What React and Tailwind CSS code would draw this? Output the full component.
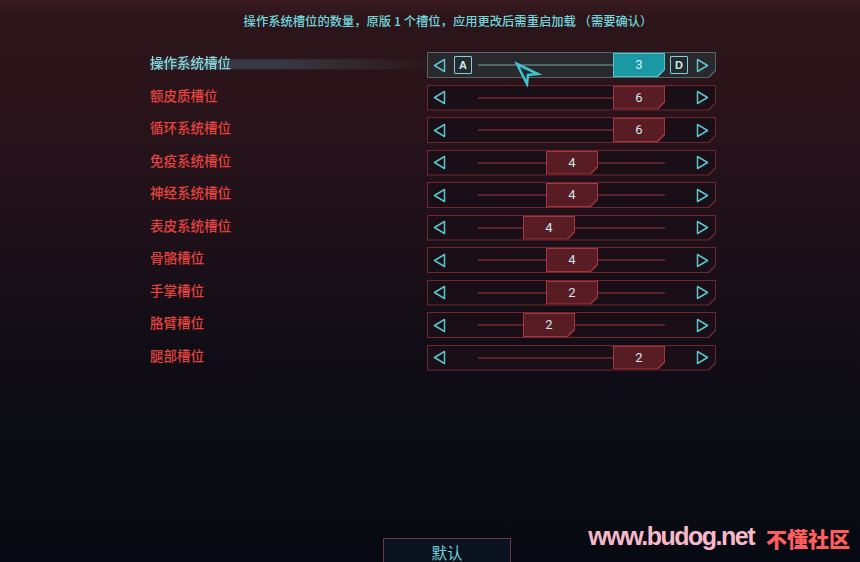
import React from 'react'

const rows = [
  { label: '操作系统槽位', value: 3, left: 186, active: true },
  { label: '额皮质槽位', value: 6, left: 186 },
  { label: '循环系统槽位', value: 6, left: 186 },
  { label: '免疫系统槽位', value: 4, left: 119 },
  { label: '神经系统槽位', value: 4, left: 119 },
  { label: '表皮系统槽位', value: 4, left: 96 },
  { label: '骨骼槽位', value: 4, left: 119 },
  { label: '手掌槽位', value: 2, left: 119 },
  { label: '胳臂槽位', value: 2, left: 96 },
  { label: '腿部槽位', value: 2, left: 186 },
]

const cut7 = '[clip-path:polygon(0_0,100%_0,100%_calc(100%_-_7px),calc(100%_-_7px)_100%,0_100%)]'

function Arrow({ dir }) {
  return (
    <svg width="13" height="15" viewBox="0 0 13 15" className="shrink-0">
      {dir === 'left' ? (
        <polygon points="11.5,1.5 1.5,7.5 11.5,13.5" fill="none" stroke="#5cc3cc" strokeWidth="1.5" strokeLinejoin="round" />
      ) : (
        <polygon points="1.5,1.5 11.5,7.5 1.5,13.5" fill="none" stroke="#5cc3cc" strokeWidth="1.5" strokeLinejoin="round" />
      )}
    </svg>
  )
}

function Key({ k }) {
  return (
    <div className="w-[18px] h-[18px] border border-[#7fd2d8] rounded-[1px] flex items-center justify-center text-[11px] font-bold text-[#c6eef0] leading-none shrink-0 font-['Liberation_Sans',sans-serif]">
      {k}
    </div>
  )
}

function Slider({ row }) {
  const active = row.active
  return (
    <div className={`relative w-[289px] h-[26px] p-px ${cut7} ${active ? 'bg-[#56656a]' : 'bg-[#6e2731]'}`}>
      <div className={`relative w-full h-full ${cut7} ${active ? 'bg-[#29282d]' : 'bg-[#1a0f17]'} flex items-center pl-[5px] pr-[6px]`}>
        <Arrow dir="left" />
        {active ? (
          <div className="ml-[8px]"><Key k="A" /></div>
        ) : (
          <div className="ml-[8px] w-[18px]" />
        )}
        <div className="flex-1 flex items-center pl-[6px] pr-[5px]">
          <div className={`h-[2px] w-full ${active ? 'bg-[#4d676c]' : 'bg-[#5c2229]'}`} />
        </div>
        {active ? (
          <div className="mr-[8px]"><Key k="D" /></div>
        ) : (
          <div className="mr-[8px] w-[18px]" />
        )}
        <Arrow dir="right" />
        {/* thumb sits over the track */}
        <div
          className={`absolute top-0 h-full w-[52px] p-px ${cut7} ${active ? 'bg-[#4fc7cf]' : 'bg-[#a6353d]'}`}
          style={{ left: row.left - 1 }}
        >
          <div className={`w-full h-full ${cut7} flex items-center justify-center text-[13px] font-['Roboto',sans-serif] ${active ? 'bg-[#1a98a3] text-[#d2f4f6]' : 'bg-[#581c25] text-[#cfe6ea]'}`}>
            {row.value}
          </div>
        </div>
      </div>
    </div>
  )
}

export default function App() {
  return (
    <div className="relative w-[860px] h-[562px] overflow-hidden flex flex-col bg-[linear-gradient(180deg,#3a1c22_0%,#2c151a_3%,#29131a_20%,#1e1019_42%,#110d16_62%,#0a0b13_78%,#070a12_100%)] font-['Noto_Sans_CJK_SC',sans-serif]">
      {/* header hint */}
      <div className="pt-[12px] h-[52px] text-center text-[12.3px] leading-[18px] font-medium text-[#72d4da] pl-[36px]">
        操作系统槽位的数量，原版 1 个槽位，应用更改后需重启加载 （需要确认）
      </div>

      {/* slot rows */}
      <div className="flex flex-col gap-[6.5px] pl-[150px]">
        {rows.map((row) => (
          <div key={row.label} className="flex items-center h-[26px]">
            <div className="w-[277px] pb-[6px]">
              <div
                className={`text-[13.5px] leading-[16px] font-medium ${
                  row.active
                    ? 'text-[#86d6dc] w-[285px] bg-[linear-gradient(180deg,rgba(80,115,125,0)_0%,rgba(80,115,125,0)_25%,rgba(80,115,125,0.4)_40%,rgba(80,115,125,0.4)_90%,rgba(80,115,125,0)_100%)] [mask-image:linear-gradient(90deg,#000_0%,#000_45%,transparent_100%)]'
                    : 'w-max text-[#e2443f]'
                }`}
              >
                {row.label}
              </div>
            </div>
            <Slider row={row} />
          </div>
        ))}
      </div>

      <div className="flex-1" />

      {/* footer */}
      <div className="h-[24px] flex items-start pl-[383px]">
        <div className="w-[128px] h-[30px] p-px bg-[#6a3a42] shrink-0">
          <div className="w-full h-full bg-[#0c1320] flex justify-center pt-[3px] text-[15.5px] leading-[20px] text-[#6fd0d8]">
            默认
          </div>
        </div>
        <div className="ml-auto mr-[10px] -mt-[14px] flex items-end gap-[12px] font-bold leading-none">
          <span className="text-[25px] tracking-[-1.5px] text-[#f7b9c8] font-['Liberation_Sans',sans-serif]">www.budog.net</span>
          <span className="text-[21px] font-black text-[#ff5e5e] font-['Noto_Sans_CJK_SC',sans-serif]">不懂社区</span>
        </div>
      </div>

      {/* mouse pointer */}
      <svg className="absolute left-[514px] top-[61px]" width="28" height="26" viewBox="0 0 28 26">
        <polygon points="3,3 24,13 14,14 13,23" fill="#1d2a30" stroke="#3fc3cc" strokeWidth="2.5" strokeLinejoin="miter" />
      </svg>
    </div>
  )
}
